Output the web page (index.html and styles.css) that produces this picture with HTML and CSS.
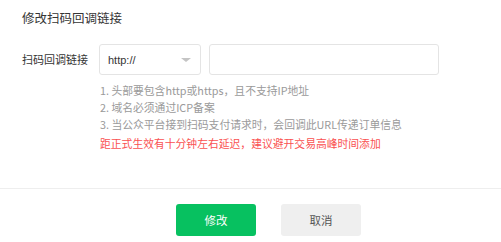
FILE: index.html
```html
<!DOCTYPE html>
<html lang="zh-CN">
<head>
    <meta charset="UTF-8">
    <title>修改扫码回调链接</title>
    <link rel="stylesheet" href="styles.css">
</head>
<body>
    <div class="dialog">
        <div class="dialog-body">
            <h3 class="dialog-title">修改扫码回调链接</h3>
            <div class="form-row">
                <label class="form-label">扫码回调链接</label>
                <div class="form-field">
                    <div class="inputs">
                        <div class="select">
                            <span>http://</span>
                            <i class="arrow"></i>
                        </div>
                        <input type="text" class="url-input">
                    </div>
                    <ul class="tips">
                        <li>1. 头部要包含http或https，且不支持IP地址</li>
                        <li>2. 域名必须通过ICP备案</li>
                        <li>3. 当公众平台接到扫码支付请求时，会回调此URL传递订单信息</li>
                        <li class="warn">距正式生效有十分钟左右延迟，建议避开交易高峰时间添加</li>
                    </ul>
                </div>
            </div>
        </div>
        <div class="dialog-footer">
            <button class="btn btn-primary">修改</button>
            <button class="btn btn-default">取消</button>
        </div>
    </div>
</body>
</html>
```

FILE: styles.css
```css
body {
    margin: 0;
    background-color: #fff;
    font-family: "Noto Sans CJK SC", "Liberation Sans", sans-serif;
    color: #353535;
}
.dialog {
    width: 501px;
}
.dialog-body {
    padding: 9px 22px 0;
    height: 179px;
    border-bottom: 1px solid #eee;
}
.dialog-title {
    margin: 0;
    font-size: 12.5px;
    font-weight: normal;
    line-height: 18px;
    color: #353535;
}
.form-row {
    display: flex;
    margin-top: 17px;
}
.form-label {
    width: 77px;
    font-size: 11px;
    line-height: 31px;
    color: #353535;
}
.inputs {
    display: flex;
    gap: 8px;
}
.select {
    box-sizing: border-box;
    width: 102px;
    height: 31px;
    border: 1px solid #e4e4e4;
    border-radius: 3px;
    padding: 0 8px;
    display: flex;
    align-items: center;
    justify-content: space-between;
    font-family: "Liberation Sans", sans-serif;
    font-size: 11px;
    color: #353535;
}
.arrow {
    width: 0;
    height: 0;
    border-left: 5px solid transparent;
    border-right: 5px solid transparent;
    border-top: 4px solid #c4c4c4;
    margin-right: 1px;
}
.url-input {
    box-sizing: border-box;
    width: 230px;
    height: 31px;
    border: 1px solid #e4e4e4;
    border-radius: 3px;
    outline: none;
}
.tips {
    list-style: none;
    margin: 7px 0 0;
    padding: 0 0 0 1px;
    font-size: 10.8px;
    line-height: 17px;
    color: #9a9a9a;
}
.tips .warn {
    margin-top: 2px;
    color: #fa5151;
}
.dialog-footer {
    display: flex;
    gap: 25px;
    padding: 15px 0 0 176px;
}
.btn {
    width: 80px;
    height: 32px;
    border: none;
    border-radius: 3px;
    font-family: "Noto Sans CJK SC", sans-serif;
    font-size: 11.5px;
    cursor: pointer;
}
.btn-primary {
    background-color: #07c160;
    color: #fff;
}
.btn-default {
    background-color: #efefef;
    color: #555;
}
```
